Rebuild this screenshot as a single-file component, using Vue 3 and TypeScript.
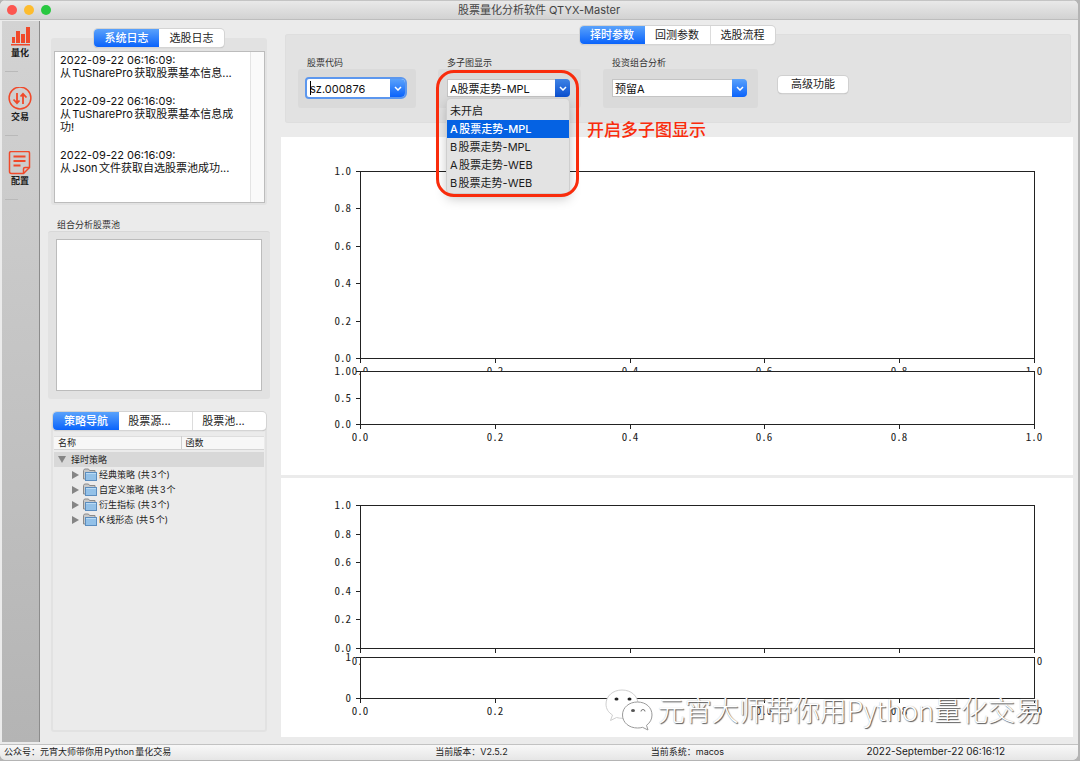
<script setup lang="ts">
import { ref } from 'vue'

interface Axes {
  top: number
  bottom: number
  yTicks: string[]
}

interface Figure {
  id: string
  height: number
  axes: Axes[]
}

const AXIS_LEFT = 79
const AXIS_RIGHT = 753
const steps = ['0.0', '0.2', '0.4', '0.6', '0.8', '1.0']

const figures: Figure[] = [
  {
    id: 'main',
    height: 338,
    axes: [
      { top: 34, bottom: 221, yTicks: steps },
      { top: 234, bottom: 287, yTicks: ['0.0', '0.5', '1.0'] },
    ],
  },
  {
    id: 'sub',
    height: 259,
    axes: [
      { top: 27, bottom: 170, yTicks: steps },
      { top: 179, bottom: 220, yTicks: ['0', '1'] },
    ],
  },
]

const tickX = (i: number) => Math.round(AXIS_LEFT + ((AXIS_RIGHT - AXIS_LEFT) * i) / 5)
const tickY = (a: Axes, i: number) =>
  Math.round(a.bottom - ((a.bottom - a.top) * i) / (a.yTicks.length - 1))

const logs = [
  '2022-09-22 06:16:09:\n从TuSharePro获取股票基本信息...',
  '2022-09-22 06:16:09:\n从TuSharePro获取股票基本信息成\n功!',
  '2022-09-22 06:16:09:\n从Json文件获取自选股票池成功...',
]

const chartModes = ['未开启', 'A股票走势-MPL', 'B股票走势-MPL', 'A股票走势-WEB', 'B股票走势-WEB']
const chartMode = ref('A股票走势-MPL')
const stockCode = ref('sz.000876')
const logTab = ref('系统日志')
const navTab = ref('策略导航')
const paramTab = ref('择时参数')

const strategies = ['经典策略 (共3个)', '自定义策略 (共3个', '衍生指标 (共3个)', 'K线形态 (共5个)']
const status = [
  '公众号：元宵大师带你用Python量化交易',
  '当前版本：V2.5.2',
  '当前系统：macos',
  '2022-September-22 06:16:12',
]
</script>

<template>
  <div class="window">
    <header class="titlebar">
      <div class="lights">
        <button class="light red" aria-label="关闭"></button>
        <button class="light yellow" aria-label="最小化"></button>
        <button class="light green" aria-label="缩放"></button>
      </div>
      <h1>股票量化分析软件 QTYX-Master</h1>
    </header>

    <div class="body">
      <nav class="toolbar">
        <button class="tool">
          <svg width="24" height="24" viewBox="0 0 24 24" fill="#f0492a">
            <rect x="4" y="14" width="3" height="6" />
            <rect x="8" y="8" width="4" height="12" />
            <rect x="13" y="11" width="4" height="9" />
            <rect x="18" y="4" width="4" height="16" />
            <rect x="3" y="21" width="19" height="1.500" />
          </svg>
          <span>量化</span>
        </button>
        <button class="tool">
          <svg width="24" height="24" viewBox="0 0 24 24" fill="none" stroke="#f0492a" stroke-width="1.800">
            <circle cx="12" cy="11" r="10.900" stroke-width="1.500" />
            <path d="M9 6v10.500M5.500 12.500L9 16.200l2.500-2.700" />
            <path d="M15 17V6.500M12.500 9.500L15 6.800l3.500 3.700" />
          </svg>
          <span>交易</span>
        </button>
        <button class="tool">
          <svg width="24" height="24" viewBox="0 0 24 24" fill="none" stroke="#f0492a" stroke-width="1.500">
            <path d="M15.500 22.500H3.500a2 2 0 0 1-2-2V2a1.500 1.500 0 0 1 1.500-1.500h17a1.500 1.500 0 0 1 1.500 1.500v14.500z" />
            <path d="M15.500 22.500v-4.500a1.500 1.500 0 0 1 1.500-1.500h4.500" />
            <path d="M5.500 5.500h12M5.500 10h12M5.500 14.500h7" stroke-width="1.800" />
          </svg>
          <span>配置</span>
        </button>
      </nav>

      <aside class="left">
        <section class="log-group">
          <div class="tabs">
            <button
              v-for="t in ['系统日志', '选股日志']"
              :key="t"
              :class="{ active: logTab === t }"
              @click="logTab = t"
            >{{ t }}</button>
          </div>
          <div class="log-frame">
            <div class="log" role="log">
              <div class="log-text">
                <p v-for="(l, i) in logs" :key="i">{{ l }}</p>
              </div>
              <div class="log-scroll"></div>
            </div>
          </div>
        </section>

        <section class="pool">
          <label class="caption" for="pool">组合分析股票池</label>
          <div class="pool-frame">
            <textarea id="pool" readonly></textarea>
          </div>
        </section>

        <section class="nav-group">
          <div class="tabs wide">
            <button
              v-for="t in ['策略导航', '股票源...', '股票池...']"
              :key="t"
              :class="{ active: navTab === t }"
              @click="navTab = t"
            >{{ t }}</button>
          </div>
          <div class="nav-frame">
            <table>
              <thead>
                <tr>
                  <th class="name">名称</th>
                  <th>函数</th>
                </tr>
              </thead>
              <tbody>
                <tr class="root">
                  <td colspan="2">
                    <div class="node">
                      <svg width="8" height="7" viewBox="0 0 8 7"><path d="M0 0h8L4 7z" fill="#858585" /></svg>
                      <span>择时策略</span>
                    </div>
                  </td>
                </tr>
                <tr v-for="s in strategies" :key="s">
                  <td>
                    <div class="node child">
                      <svg width="7" height="8" viewBox="0 0 7 8"><path d="M0 0l7 4-7 4z" fill="#858585" /></svg>
                      <svg width="14" height="13" viewBox="0 0 14 13">
                        <path d="M.5 11V2.500l1-1.500h4l1 1.500H12V11z" fill="#c9c9c9" stroke="#8a8a8a" />
                        <rect x="2.500" y="4.500" width="11" height="8" fill="#93c1e8" stroke="#5b8dbf" />
                        <path d="M3 5.500h10" stroke="#b9dbf5" />
                      </svg>
                      <span>{{ s }}</span>
                    </div>
                  </td>
                  <td></td>
                </tr>
              </tbody>
            </table>
          </div>
        </section>
      </aside>

      <main class="right">
        <div class="tabs params-tabs">
          <button
            v-for="t in ['择时参数', '回测参数', '选股流程']"
            :key="t"
            :class="{ active: paramTab === t }"
            @click="paramTab = t"
          >{{ t }}</button>
        </div>

        <section class="params">
          <div class="field code">
            <label class="caption" for="code">股票代码</label>
            <div class="field-box">
              <div class="combo focused">
                <span class="caret"></span>
                <input id="code" v-model="stockCode" type="text" />
                <span class="arrow">
                  <svg width="8" height="5" viewBox="0 0 8 5"><path d="M1 1l3 3 3-3" /></svg>
                </span>
              </div>
            </div>
          </div>

          <div class="field mode">
            <label class="caption" for="mode">多子图显示</label>
            <div class="field-box">
              <div class="combo">
                <select id="mode" v-model="chartMode">
                  <option v-for="m in chartModes" :key="m">{{ m }}</option>
                </select>
                <span class="arrow pressed">
                  <svg width="8" height="5" viewBox="0 0 8 5"><path d="M1 1l3 3 3-3" /></svg>
                </span>
                <ul class="menu" role="listbox">
                  <li
                    v-for="m in chartModes"
                    :key="m"
                    role="option"
                    :aria-selected="m === chartMode"
                    :class="{ selected: m === chartMode }"
                    @click="chartMode = m"
                  >{{ m }}</li>
                </ul>
              </div>
            </div>
            <div class="highlight"></div>
            <div class="note">开启多子图显示</div>
          </div>

          <div class="field portfolio">
            <label class="caption" for="portfolio">投资组合分析</label>
            <div class="field-box">
              <div class="combo">
                <select id="portfolio">
                  <option>预留A</option>
                </select>
                <span class="arrow">
                  <svg width="8" height="5" viewBox="0 0 8 5"><path d="M1 1l3 3 3-3" /></svg>
                </span>
              </div>
            </div>
          </div>

          <button class="advanced">高级功能</button>
        </section>

        <div class="figures">
          <svg
            v-for="f in figures"
            :key="f.id"
            class="figure"
            :viewBox="`0 0 792 ${f.height}`"
          >
            <g v-for="(a, n) in f.axes" :key="n">
              <rect
                :x="AXIS_LEFT + 0.5"
                :y="a.top + 0.5"
                :width="AXIS_RIGHT - AXIS_LEFT"
                :height="a.bottom - a.top"
                fill="#fff"
                stroke="#222"
              />
              <g v-for="(s, i) in steps" :key="'x' + i">
                <path :d="`M${tickX(i) + 0.5} ${a.bottom}v5`" stroke="#222" />
                <text :x="tickX(i)" :y="a.bottom + 17" text-anchor="middle">{{ s }}</text>
              </g>
              <g v-for="(s, i) in a.yTicks" :key="'y' + i">
                <path :d="`M${AXIS_LEFT - 4} ${tickY(a, i) + 0.5}h4`" stroke="#222" />
                <text :x="AXIS_LEFT - 9" :y="tickY(a, i) + 4" text-anchor="end">{{ s }}</text>
              </g>
            </g>
          </svg>
        </div>

        <div class="watermark">
          <svg width="48" height="42" viewBox="0 0 48 42">
            <g fill="#fff" stroke="#9a9a9a" stroke-width="1">
              <path d="M17 1C8 1 1 7 1 15c0 5 2.500 8.500 6.500 11L5.500 31.500l6-3c2 .600 4 .800 6.500.800 9-.200 15-6.500 15-14.300C33 7 26 1 17 1z" stroke="#cfcfcf" />
              <path d="M32.500 13C24 13 17.500 18.500 17.500 26S24 39 32.500 39c2 0 3.500-.200 5-.700l5.500 2.700-1.500-4.700c3.500-2.500 5.500-6 5.500-10.300C47 18.500 41 13 32.500 13z" />
            </g>
            <ellipse cx="11.500" cy="10" rx="2" ry="1.500" fill="#222" />
            <ellipse cx="24.500" cy="10" rx="2" ry="1.500" fill="#222" />
            <ellipse cx="28" cy="21.500" rx="2" ry="1.500" fill="#555" />
            <path d="M36 22.500a2 2 0 0 1 4 0" fill="none" stroke="#777" />
          </svg>
          <span>元宵大师带你用Python量化交易</span>
        </div>
      </main>
    </div>

    <footer class="statusbar">
      <span v-for="s in status" :key="s">{{ s }}</span>
    </footer>
  </div>
</template>

<style>
body {
  margin: 0;
  background: #b4b4b4;
}
</style>

<style scoped>
.window,
.window * {
  box-sizing: border-box;
}
.window {
  display: flex;
  flex-direction: column;
  min-height: calc(100vh - 1px);
  margin-right: 2px;
  background: #ebebeb;
  border-radius: 6px;
  overflow: hidden;
  color: #1c1c1c;
  font: 11px/13px Inter, 'Noto Sans CJK SC', sans-serif;
  text-autospace: normal;
}
button,
input,
select,
textarea {
  font: inherit;
  color: inherit;
  margin: 0;
  padding: 0;
  border: 0;
  outline: 0;
  border-radius: 0;
  background: none;
}
.titlebar {
  display: grid;
  grid-template-columns: 1fr auto 1fr;
  align-items: center;
  height: 20px;
  border-top: 1px solid #c4c4c4;
  border-bottom: 1px solid #bdbdbd;
  background: linear-gradient(#e9e9e9, #d2d2d2);
}
.titlebar h1 {
  margin: 0;
  font-size: 11px;
  font-weight: 400;
  color: #444;
}
.lights {
  display: flex;
  gap: 7px;
  padding-left: 7px;
}
.light {
  width: 10px;
  height: 10px;
  border-radius: 50%;
}
.red { background: #fc5650; }
.yellow { background: #fdbc2e; }
.green { background: #28c840; }

.body {
  display: flex;
  flex: 1;
}
.toolbar {
  display: flex;
  flex-direction: column;
  gap: 15px;
  width: 38px;
  margin: 1px 0 2px 2px;
  padding: 2px 1px 0 0;
  border-right: 1px solid #8c8c8c;
  background: linear-gradient(#d3d3d3, #b4b4b4);
}
.tool {
  display: flex;
  flex-direction: column;
  align-items: center;
  font-size: 9px;
  line-height: 12px;
  font-weight: 700;
}
.tool::after {
  content: '';
  align-self: flex-start;
  width: 13px;
  height: 1px;
  margin: 12px 0 0 3px;
  background: #b9b9b9;
}

.left {
  display: flex;
  flex-direction: column;
  width: 241px;
  padding: 9px 11px 12px 8px;
}
.tabs {
  position: relative;
  display: flex;
  align-self: center;
  height: 18px;
  border-radius: 4px;
  background: #fff;
  box-shadow: 0 0 0 1px #d4d4d4, 0 1px 1px #a8a8a8;
}
.tabs button {
  width: 65px;
  border-left: 1px solid #dcdcdc;
  text-align: center;
}
.tabs button:first-child {
  border-left: 0;
  border-radius: 4px 0 0 4px;
}
.tabs .active {
  color: #fff;
  font-weight: 500;
  background: linear-gradient(#5aa2fb, #0a63fb);
}
.tabs .active + button {
  border-left: 0;
}
.caption {
  display: block;
  padding-left: 9px;
  font-size: 9px;
  line-height: 12px;
  color: #333;
}
.log-group,
.nav-group {
  display: flex;
  flex-direction: column;
  margin: 0 3px;
}
.log-frame {
  margin-top: -9px;
  padding: 13px 2px 2px 3px;
  border-radius: 3px;
  background: #e2e2e2;
}
.log {
  display: flex;
  height: 152px;
  border: 1px solid #bcbcbc;
  background: #fff;
}
.log-text {
  flex: 1;
  padding: 2px 0 0 5px;
  white-space: pre;
  color: #111;
}
.log-text p {
  margin: 0 0 15px;
}
.log-scroll {
  width: 14px;
  border-left: 1px solid #e4e4e4;
  background: #fafafa;
}
.pool {
  margin-top: 14px;
}
.pool-frame {
  padding: 7px 8px 8px;
  border-radius: 3px;
  border-top: 1px solid #d8d8d8;
  background: #e2e2e2;
}
.pool-frame textarea {
  display: block;
  width: 100%;
  height: 152px;
  border: 1px solid #bcbcbc;
  background: #fff;
  resize: none;
}
.nav-group {
  flex: 1;
  margin-top: 13px;
}
.tabs.wide {
  align-self: stretch;
  margin: 0 1px 0 2px;
}
.tabs.wide button {
  flex: 1;
  padding-right: 12px;
}
.tabs.wide .active {
  flex: none;
  width: 66px;
  padding-right: 0;
}
.nav-frame {
  flex: 1;
  margin-top: -9px;
  padding: 13px 1px 0;
  border: 2px solid #e2e2e2;
  border-radius: 3px;
}
table {
  width: 100%;
  border-collapse: collapse;
  table-layout: fixed;
  font-size: 9px;
  line-height: 12px;
}
th {
  height: 13px;
  padding: 0 4px;
  text-align: left;
  font-weight: 400;
  background: #f7f7f7;
  border-top: 1px solid #dedede;
  border-bottom: 1px solid #d4d4d4;
}
th.name {
  width: 127px;
  border-right: 1px solid #cfcfcf;
}
tbody::before {
  content: '';
  display: block;
  height: 2px;
}
td {
  height: 15px;
  padding: 0;
}
.root {
  background: #d8d8d8;
}
.node {
  display: flex;
  align-items: center;
  gap: 5px;
  padding-left: 4px;
  white-space: nowrap;
}
.node.child {
  gap: 2px;
  padding-left: 18px;
}
.node.child svg:first-child {
  margin-right: 2px;
}

.right {
  position: relative;
  display: flex;
  flex-direction: column;
  flex: 1;
  min-width: 0;
  padding: 6px 5px 7px 0;
}
.params-tabs {
  z-index: 1;
}
.params {
  display: flex;
  align-items: flex-start;
  gap: 22px;
  margin: -10px 2px 14px 4px;
  padding: 23px 13px 15px;
  border-radius: 3px;
  background: #e2e2e2;
  box-shadow: inset 0 0 0 1px #dedede;
}
.field {
  position: relative;
}
.code { width: 118px; }
.mode { width: 143px; }
.portfolio { width: 155px; }
.field-box {
  padding: 10px 11px 11px 9px;
  border-radius: 3px;
  background: #dadada;
}
.combo {
  position: relative;
  display: flex;
  height: 18px;
  border-radius: 0 4px 4px 0;
  background: #fff;
  box-shadow: inset 0 0 0 1px #c4c4c4;
}
.combo.focused {
  box-shadow: 0 0 0 2px #5c97ee;
  border-radius: 2px 4px 4px 2px;
}
.combo input,
.combo select {
  flex: 1;
  min-width: 0;
  padding: 2px 0 0 3px;
  appearance: none;
  color: #111;
}
.caret {
  position: absolute;
  left: 3px;
  top: 2px;
  width: 1px;
  height: 14px;
  background: #000;
}
.arrow {
  display: flex;
  align-items: center;
  justify-content: center;
  width: 15px;
  border-radius: 0 4px 4px 0;
  background: linear-gradient(#5aa2fb, #0a63fb);
}
.arrow.pressed {
  background: linear-gradient(#3f83e4, #0a4fd0);
}
.arrow path {
  fill: none;
  stroke: #fff;
  stroke-width: 1.5;
}
.menu {
  position: absolute;
  z-index: 2;
  top: 20px;
  left: 0;
  right: 1px;
  margin: 0;
  padding: 3px 0 1px;
  list-style: none;
  border-radius: 4px;
  background: #e3e3e3;
  box-shadow: 0 0 0 1px #cfcfcf, 0 5px 12px rgba(0, 0, 0, 0.25);
}
.menu li {
  padding: 0 3px;
  line-height: 18px;
  white-space: nowrap;
}
.menu .selected {
  color: #fff;
  font-weight: 500;
  background: #0562e3;
}
.highlight {
  position: absolute;
  z-index: 3;
  top: 13px;
  left: -2px;
  width: 143px;
  height: 127px;
  border: 3px solid #f92c0c;
  border-radius: 18px;
  pointer-events: none;
}
.note {
  position: absolute;
  z-index: 3;
  top: 63px;
  left: 149px;
  font-size: 17px;
  line-height: 20px;
  font-weight: 500;
  color: #f92c0c;
  white-space: nowrap;
}
.advanced {
  width: 70px;
  height: 17px;
  margin: 19px 0 0 -2px;
  border-radius: 4px;
  background: #fff;
  box-shadow: 0 0 0 1px #d0d0d0, 0 1px 1px #a8a8a8;
}
.figures {
  display: flex;
  flex-direction: column;
  gap: 3px;
}
.figure {
  display: block;
  width: 100%;
  background: #fff;
  font-family: 'Noto Sans Mono CJK SC', 'Noto Sans CJK SC', sans-serif;
  font-size: 11px;
  fill: #1c1c1c;
}
.watermark {
  position: absolute;
  right: 36px;
  bottom: 13px;
  display: flex;
  align-items: center;
  gap: 5px;
  font: 300 27px/40px 'Noto Sans CJK SC', sans-serif;
  text-autospace: no-autospace;
  color: #fff;
  text-shadow: 1px 1px 1px #555, 0 0 1px #bbb;
  white-space: nowrap;
}
.statusbar {
  display: grid;
  grid-template-columns: 40% 20% 20% 20%;
  height: 16px;
  border-top: 1px solid #c2c2c2;
  background: linear-gradient(#f8f8f8, #e6e6e6);
  font-size: 9px;
  line-height: 13px;
}
.statusbar span {
  padding-left: 4px;
  white-space: nowrap;
}
.statusbar span:last-child {
  font-size: 10px;
}
</style>
